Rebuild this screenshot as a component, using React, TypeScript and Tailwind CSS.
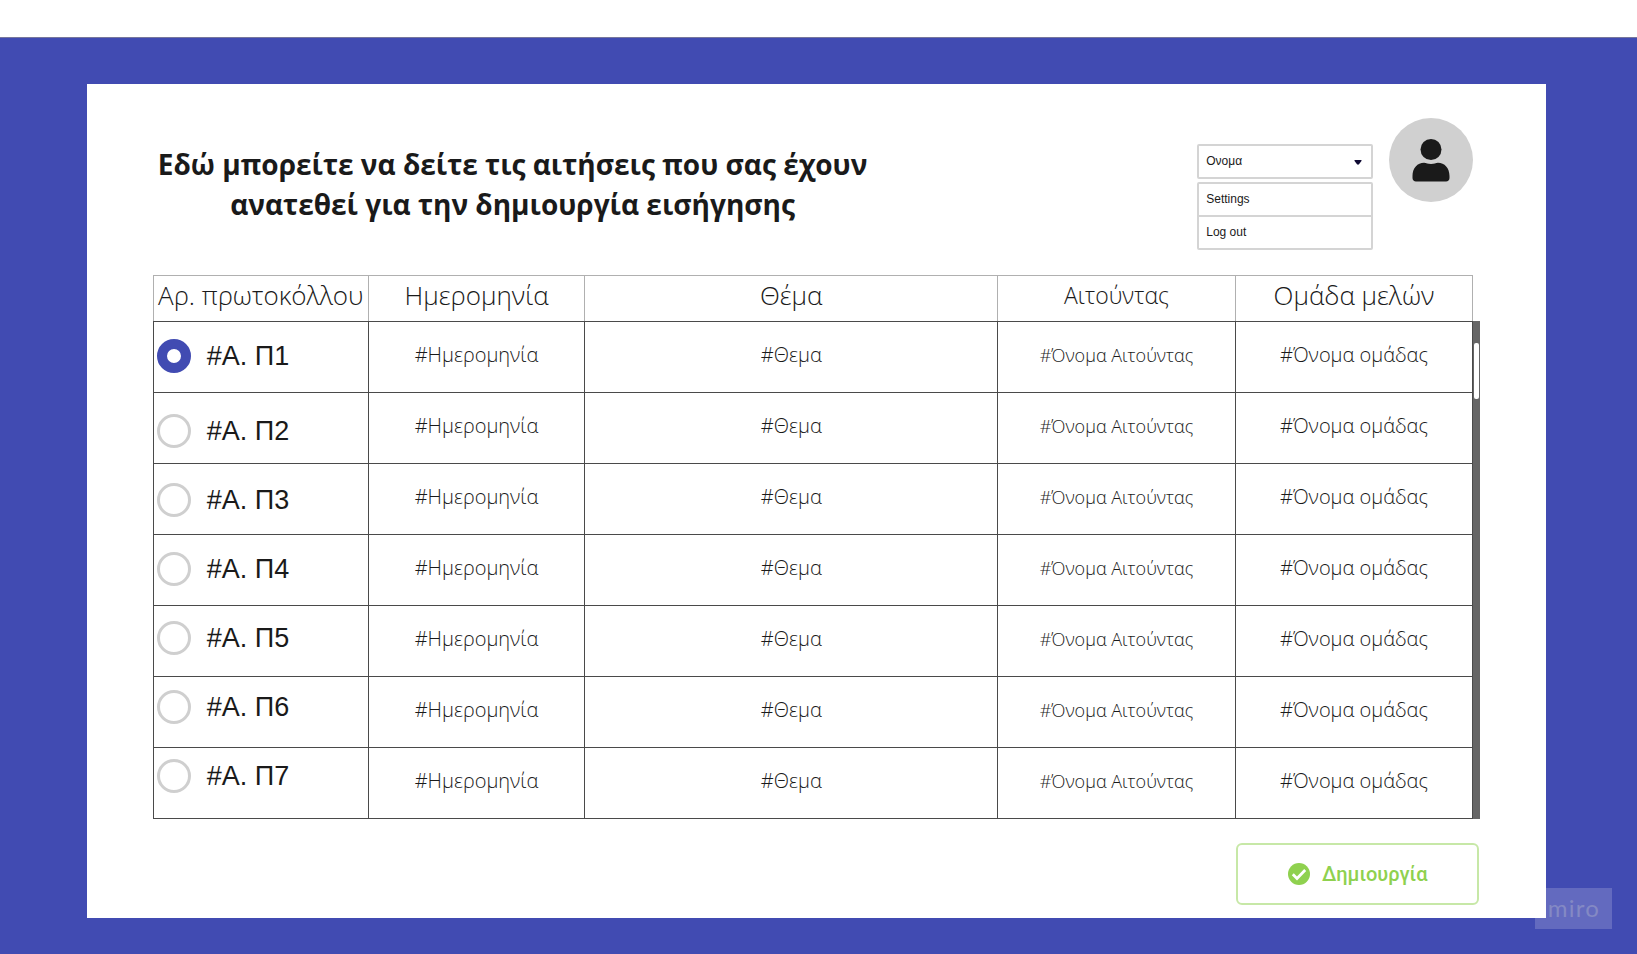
import React from "react";

const rows = [1, 2, 3, 4, 5, 6, 7];

const columns = [
  { title: "Αρ. πρωτοκόλλου", width: "w-[16.3%]", head: "text-[26px]" },
  { title: "Ημερομηνία", width: "w-[16.4%]", head: "text-[26px]" },
  { title: "Θέμα", width: "w-[31.3%]", head: "text-[26px]" },
  { title: "Αιτούντας", width: "w-[18%]", head: "text-[23px]" },
  { title: "Ομάδα μελών", width: "w-[18%]", head: "text-[26px]" },
];

function UserIcon() {
  return (
    <svg viewBox="0 0 84 84" className="size-full" fill="#1a1a1a" aria-hidden="true">
      <circle cx="42" cy="31.5" r="10.5" />
      <path d="M23.5 58c0-8 5-13.300 11.500-13.300 2.500 0 3.500 1.300 7 1.300s4.500-1.300 7-1.300c6.500 0 11.500 5.300 11.500 13.300v2c0 2-1.500 3.500-3.500 3.500h-30c-2 0-3.500-1.500-3.500-3.500z" />
    </svg>
  );
}

function AccountMenu() {
  return (
    <div className="flex w-44 flex-col gap-[3px] text-xs text-[#1a1a1a]">
      <div className="relative">
        <select
          aria-label="Ονομα"
          className="block h-[35px] w-full appearance-none rounded-xs border-2 border-[#d4d4d4] bg-white px-[7px] pb-0.5"
        >
          <option>Ονομα</option>
        </select>
        <svg viewBox="0 0 8 5" className="pointer-events-none absolute top-4 right-[11px] h-[5px] w-2" fill="#0f0a33" aria-hidden="true">
          <path d="M1 0h6q1 0 .6.8L5 4.300q-1 .8-2 0L.4.8Q0 0 1 0z" />
        </svg>
      </div>
      <ul className="divide-y-2 divide-[#d4d4d4] rounded-xs border-2 border-[#d4d4d4]">
        {["Settings", "Log out"].map((item) => (
          <li key={item}>
            <button type="button" className="block h-[31px] w-full px-[7px] pb-0.5 text-left">
              {item}
            </button>
          </li>
        ))}
      </ul>
    </div>
  );
}

function ProtocolList() {
  return (
    <fieldset className="z-10 col-start-1 row-start-1 mt-[46px] flex flex-col justify-self-start">
      {rows.map((n) => (
        <label key={n} className="flex h-[69px] items-center gap-4 pl-1 first:mb-1.5">
          <input
            type="radio"
            name="protocol"
            defaultChecked={n === 1}
            className="size-[34px] appearance-none rounded-full border-3 border-[#cfcfcf] bg-white checked:border-10 checked:border-[#414bb2]"
          />
          <span className="text-[27px] leading-8 text-[#1a1a1a]">#Α. Π{n}</span>
        </label>
      ))}
    </fieldset>
  );
}

function RequestTable() {
  return (
    <div className="flex">
      <div className="grid flex-1">
        <table className="col-start-1 row-start-1 w-full table-fixed border-collapse text-center font-['Open_Sans','Noto_Sans',sans-serif] text-[#1a1a1a]">
          <thead>
            <tr className="h-[46px]">
              {columns.map((c) => (
                <th
                  key={c.title}
                  scope="col"
                  className={`${c.width} ${c.head} border border-[#b0b0b0] border-b-[#4a4a4a] pb-2 leading-8 font-light whitespace-nowrap`}
                >
                  {c.title}
                </th>
              ))}
            </tr>
          </thead>
          <tbody>
            {rows.map((n) => (
              <tr key={n} className="h-[71px] text-[20px] leading-7 font-light *:border *:border-[#4a4a4a] *:pb-1">
                <td />
                <td>#Ημερομηνία</td>
                <td>#Θεμα</td>
                <td className="text-[18px]">#Όνομα Αιτούντας</td>
                <td>#Όνομα ομάδας</td>
              </tr>
            ))}
          </tbody>
        </table>
        <ProtocolList />
      </div>
      <div className="mt-[46px] w-[7px] bg-[#666] px-px pt-[22px]">
        <div className="h-14 rounded-xs bg-white" />
      </div>
    </div>
  );
}

export default function App() {
  return (
    <div className="flex min-h-screen flex-col bg-white pt-[37px] font-['Liberation_Sans',Arial,sans-serif]">
      <div className="relative flex-1 border-t border-[#77779c] bg-[#414bb2] px-[5.3%] pt-[46px] pb-9">
        <div className="absolute right-[25px] bottom-[25px] flex h-[41px] w-[77px] items-center justify-end bg-[#636abf] pr-3 pb-0.5 font-['Lato',sans-serif] text-[24px] tracking-wider text-[#8489c4]">
          miro
        </div>
        <main className="relative mr-1 bg-white px-[66px] pt-[34px] pb-[13px]">
          <header className="flex justify-between">
            <h1 className="mt-[26px] pl-[5px] text-center font-['Open_Sans','Noto_Sans',sans-serif] text-[28px] leading-10 font-bold text-[#1a1a1a]">
              Εδώ μπορείτε να δείτε τις αιτήσεις που σας έχουν
              <br />
              ανατεθεί για την δημιουργία εισήγησης
            </h1>
            <div className="mr-[7px] flex gap-4">
              <div className="mt-[26px]">
                <AccountMenu />
              </div>
              <div className="size-[84px] rounded-full bg-[#d0d0d0]">
                <UserIcon />
              </div>
            </div>
          </header>
          <div className="mt-[25px]">
            <RequestTable />
          </div>
          <div className="mt-6 mr-px flex justify-end">
            <button
              type="button"
              className="flex h-[62px] w-[243px] items-center justify-center gap-3 rounded-md border-2 border-[#c7e8a7] text-[20px] text-[#8fd14f]"
            >
              <svg viewBox="0 0 22 22" className="size-[22px]" aria-hidden="true">
                <circle cx="11" cy="11" r="11" fill="#8fd14f" />
                <path d="M4.800 11.200l4.200 4.200 8.200-8.400" fill="none" stroke="#fff" strokeWidth="2.800" />
              </svg>
              <span className="font-['Roboto',sans-serif] font-medium">Δημιουργία</span>
            </button>
          </div>
        </main>
      </div>
    </div>
  );
}
